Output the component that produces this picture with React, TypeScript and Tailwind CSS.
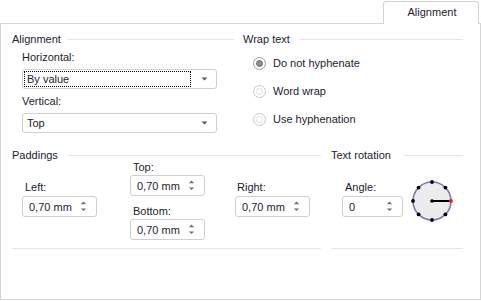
const font = { fontFamily: '"Liberation Sans", Arial, sans-serif' }

function Heading({ text, lineGap = 'ml-[6px]' }: { text: string; lineGap?: string }) {
  return (
    <div className="flex h-[12px] items-center">
      <span className="whitespace-nowrap leading-[12px]">{text}</span>
      <div className={`h-px flex-1 bg-[#e6e6e6] ${lineGap}`} />
    </div>
  )
}

function Caret() {
  return (
    <svg width="7" height="4" viewBox="0 0 7 4">
      <path d="M0.5 0.5h6L3.5 3.5z" fill="#5a5a5a" />
    </svg>
  )
}

function Select({ value, focused }: { value: string; focused?: boolean }) {
  return (
    <div className="flex h-[20px] w-[195px] items-center rounded-[3px] border border-[#cfcfcf] bg-white pl-[1px] pr-[8px]">
      <div className={`flex h-[16px] flex-1 items-center pl-[2px] ${focused ? 'border border-dotted border-black' : 'border border-transparent'}`}>
        {value}
      </div>
      <div className="ml-[9px] flex w-[8px] justify-center">
        <Caret />
      </div>
    </div>
  )
}

function Spin({ value, w = 'w-[75px]' }: { value: string; w?: string }) {
  return (
    <div className={`flex h-[21px] items-center justify-between rounded-[3px] border border-[#cfcfcf] bg-white pl-[6px] pr-[9px] ${w}`}>
      <span className="leading-[12px]">{value}</span>
      <svg width="7" height="11" viewBox="0 0 7 11">
        <path d="M0.8 3.2L3.5 0.6l2.7 2.6z" fill="#707070" />
        <path d="M0.8 7.4h5.4L3.5 10z" fill="#707070" />
      </svg>
    </div>
  )
}

function Radio({ label, checked }: { label: string; checked?: boolean }) {
  return (
    <div className="flex h-4 items-center">
      <div className={`flex h-[13px] w-[13px] items-center justify-center rounded-full border ${checked ? 'border-[#9a9a9a]' : 'border-[#c9c9c9]'}`}>
        {checked ? (
          <div className="h-[7px] w-[7px] rounded-full border border-[#6a6a6a] bg-[#8e8e8e]" />
        ) : (
          <div className="h-[7px] w-[7px] rounded-full border border-[#e2e2e2]" />
        )}
      </div>
      <span className="ml-[7px]">{label}</span>
    </div>
  )
}

function Dial() {
  const dots = [0, 45, 90, 135, 180, 225, 270, 315].map((a) => {
    const r = (a * Math.PI) / 180
    return { x: 22 + 19 * Math.cos(r), y: 22 + 19 * Math.sin(r), red: a === 0 }
  })
  return (
    <svg width="44" height="44" viewBox="0 0 44 44">
      <circle cx="22" cy="22" r="19" fill="#ececec" stroke="#7c7cb4" strokeWidth="1.6" />
      <line x1="22" y1="22" x2="41" y2="22" stroke="#000" strokeWidth="2" />
      {dots.map((d, i) => (
        <circle key={i} cx={d.x} cy={d.y} r="1.9" fill={d.red ? '#ff1a1a' : '#000'} />
      ))}
      <circle cx="22" cy="22" r="1.8" fill="#000" />
    </svg>
  )
}

export default function App() {
  return (
    <div className="h-[301px] w-[481px] bg-white text-[11px] leading-4 text-[#1c1c30]" style={font}>
      <div className="flex h-[23px] justify-end pr-[2px] pt-px">
        <div className="relative z-10 flex h-[23px] w-[96px] items-center justify-center rounded-t-[3px] border border-b-0 border-[#d3d3d3] bg-white pb-[2px] pl-[2px]">
          Alignment
        </div>
      </div>

      <div className="h-[277px] border border-[#d5d5d5] pl-[11px] pt-[9px]">
        {/* alignment + wrap text */}
        <div className="flex">
          <div className="w-[222px]">
            <Heading text="Alignment" />
            <div className="pl-[10px]">
              <div className="mt-[4px]">Horizontal:</div>
              <div className="mt-[4px]">
                <Select value="By value" focused />
              </div>
              <div className="mt-[4px]">Vertical:</div>
              <div className="mt-[4px]">
                <Select value="Top" />
              </div>
            </div>
          </div>
          <div className="ml-[9px] w-[220px]">
            <Heading text="Wrap text" lineGap="ml-[9px]" />
            <div className="flex flex-col gap-[12px] pl-[10px] pt-[10px]">
              <Radio label="Do not hyphenate" checked />
              <Radio label="Word wrap" />
              <Radio label="Use hyphenation" />
            </div>
          </div>
        </div>

        {/* paddings + rotation */}
        <div className="mt-[16px] flex">
          <div className="w-[309px]">
            <Heading text="Paddings" lineGap="ml-[10px]" />
            <div className="flex items-start pl-[10px]">
              <div className="mt-[18px]">
                <div className="pl-[3px]">Left:</div>
                <div className="mt-px">
                  <Spin value="0,70 mm" />
                </div>
              </div>
              <div className="ml-[33px]">
                <div className="pl-[3px] leading-[12px]">Top:</div>
                <div className="mt-[2px]">
                  <Spin value="0,70 mm" />
                </div>
                <div className="mt-[7px] pl-[3px]">Bottom:</div>
                <div>
                  <Spin value="0,70 mm" />
                </div>
              </div>
              <div className="ml-[30px] mt-[18px]">
                <div className="pl-[2px]">Right:</div>
                <div className="mt-px">
                  <Spin value="0,70 mm" />
                </div>
              </div>
            </div>
          </div>
          <div className="ml-[10px] w-[132px]">
            <Heading text="Text rotation" lineGap="ml-[12px]" />
            <div className="flex items-start pl-[11px]">
              <div className="mt-[18px]">
                <div className="pl-[3px]">Angle:</div>
                <div className="mt-px">
                  <Spin value="0" w="w-[61px]" />
                </div>
              </div>
              <div className="ml-[7px] mt-[18px]">
                <Dial />
              </div>
            </div>
          </div>
        </div>

        <div className="mt-[8px] flex">
          <div className="h-px w-[309px] bg-[#e6e6e6]" />
          <div className="ml-[10px] h-px w-[132px] bg-[#e6e6e6]" />
        </div>
      </div>
    </div>
  )
}
